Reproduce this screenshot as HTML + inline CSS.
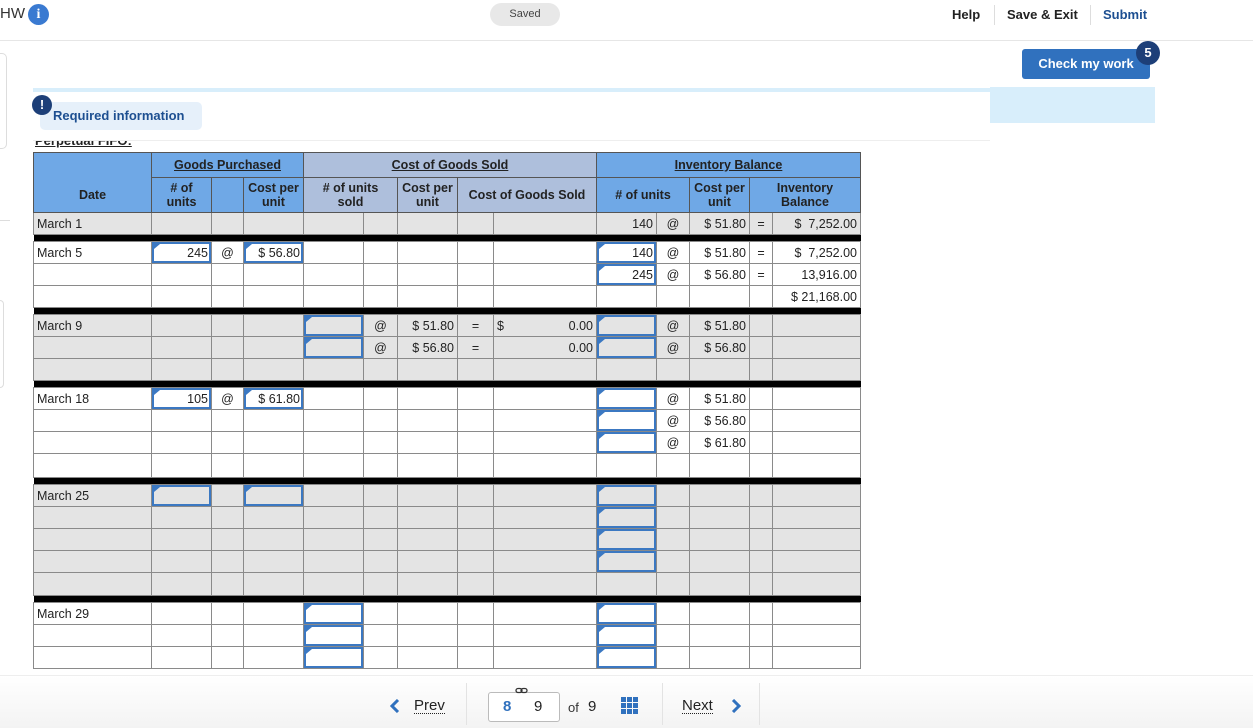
<!DOCTYPE html>
<html><head><meta charset="utf-8"><style>
*{box-sizing:border-box;margin:0;padding:0}
body{width:1253px;height:728px;overflow:hidden;background:#fff;font-family:"Liberation Sans",Arial,sans-serif;position:relative;color:#222}
.top{position:absolute;left:0;top:0;width:1253px;height:41px;border-bottom:1px solid #e6e6e6;background:#fff}
.abs{position:absolute}
table{position:absolute;left:33px;top:152px;border-collapse:collapse;table-layout:fixed;font-size:12.5px}
td{border:1px solid #8a8a8a;height:22px;padding:0 3px;white-space:nowrap;overflow:hidden;position:relative;line-height:14px}
tr.g td{background:#e4e4e4}
tr.w td{background:#fff}
tr.bar td{background:#000;height:7px;border:none;padding:0;line-height:0;font-size:0}
.r{text-align:right}.c{text-align:center}
.inp{box-shadow:inset 0 0 0 2px #3b78c2}
.inp:before{content:"";position:absolute;left:2px;top:2px;border-left:6px solid #3b78c2;border-bottom:5px solid transparent}
th{font-weight:bold;font-size:12.5px;border:1px solid #555;line-height:14px}
.b{background:#6fa8e6}.p{background:#aebfdc}
u{text-decoration:underline}
</style></head><body>
<div class="top">
<div class="abs" style="left:0;top:5px;font-size:15px;color:#333">HW</div>
<div class="abs" style="left:28px;top:4px;width:21px;height:21px;border-radius:50%;background:#3a7ad1;color:#fff;font-weight:bold;font-size:14px;text-align:center;line-height:21px;font-family:'Liberation Serif',serif">i</div>
<div class="abs" style="left:490px;top:3px;width:70px;height:23px;border-radius:12px;background:#e8e8e8;font-size:11px;color:#444;text-align:center;line-height:23px">Saved</div>
<div class="abs" style="left:952px;top:7px;font-size:13px;font-weight:bold;color:#222">Help</div>
<div class="abs" style="left:994px;top:5px;width:1px;height:20px;background:#ddd"></div>
<div class="abs" style="left:1007px;top:7px;font-size:13px;font-weight:bold;color:#222">Save &amp; Exit</div>
<div class="abs" style="left:1090px;top:5px;width:1px;height:20px;background:#ddd"></div>
<div class="abs" style="left:1103px;top:7px;font-size:13px;font-weight:bold;color:#1d4f91">Submit</div>
</div>
<div class="abs" style="left:1022px;top:49px;width:128px;height:30px;background:#3071be;border-radius:3px;color:#fff;font-weight:bold;font-size:13px;text-align:center;line-height:30px">Check my work</div>
<div class="abs" style="left:1136px;top:41px;width:24px;height:24px;border-radius:50%;background:#1d3f78;color:#fff;font-weight:bold;font-size:13px;text-align:center;line-height:24px">5</div>
<div class="abs" style="left:0;top:53px;width:7px;height:96px;border:1px solid #ddd;border-left:none;border-radius:0 5px 5px 0"></div>
<div class="abs" style="left:0;top:300px;width:4px;height:88px;border:1px solid #ddd;border-left:none;border-radius:0 5px 5px 0"></div>
<div class="abs" style="left:0;top:220px;width:10px;height:1px;background:#ddd"></div>
<div class="abs" style="left:990px;top:87px;width:165px;height:36px;background:#d8eefb"></div>
<table>
<colgroup><col style="width:118px"><col style="width:60px"><col style="width:32px"><col style="width:60px"><col style="width:60px"><col style="width:34px"><col style="width:60px"><col style="width:36px"><col style="width:103px"><col style="width:60px"><col style="width:33px"><col style="width:60px"><col style="width:23px"><col style="width:88px"></colgroup>
<tr style="height:25px"><th class="b" rowspan="2" style="padding-top:24px">Date</th><th class="b" colspan="3"><u>Goods Purchased</u></th><th class="p" colspan="5"><u>Cost of Goods Sold</u></th><th class="b" colspan="5"><u>Inventory Balance</u></th></tr>
<tr style="height:35px"><th class="b"># of<br>units</th><th class="b"></th><th class="b">Cost per<br>unit</th><th class="p" colspan="2"># of units<br>sold</th><th class="p">Cost per<br>unit</th><th class="p" colspan="2">Cost of Goods Sold</th><th class="b" colspan="2"># of units</th><th class="b">Cost per<br>unit</th><th class="b" colspan="2">Inventory<br>Balance</th></tr>
<tr class="g"><td>March 1</td><td></td><td></td><td></td><td></td><td></td><td></td><td></td><td></td><td class="r">140</td><td class="c">@</td><td class="r">$ 51.80</td><td class="c">=</td><td class="r">$ &nbsp;7,252.00</td></tr>
<tr class="bar"><td colspan="14"></td></tr>
<tr class="w"><td>March 5</td><td class="r inp">245</td><td class="c">@</td><td class="r inp">$ 56.80</td><td></td><td></td><td></td><td></td><td></td><td class="r inp">140</td><td class="c">@</td><td class="r">$ 51.80</td><td class="c">=</td><td class="r">$ &nbsp;7,252.00</td></tr>
<tr class="w"><td></td><td></td><td></td><td></td><td></td><td></td><td></td><td></td><td></td><td class="r inp">245</td><td class="c">@</td><td class="r">$ 56.80</td><td class="c">=</td><td class="r">13,916.00</td></tr>
<tr class="w"><td></td><td></td><td></td><td></td><td></td><td></td><td></td><td></td><td></td><td></td><td></td><td></td><td></td><td class="r">$ 21,168.00</td></tr>
<tr class="bar"><td colspan="14"></td></tr>
<tr class="g"><td>March 9</td><td></td><td></td><td></td><td class="inp"></td><td class="c">@</td><td class="r">$ 51.80</td><td class="c">=</td><td>$<span style="float:right">0.00</span></td><td class="inp"></td><td class="c">@</td><td class="r">$ 51.80</td><td></td><td></td></tr>
<tr class="g"><td></td><td></td><td></td><td></td><td class="inp"></td><td class="c">@</td><td class="r">$ 56.80</td><td class="c">=</td><td class="r">0.00</td><td class="inp"></td><td class="c">@</td><td class="r">$ 56.80</td><td></td><td></td></tr>
<tr class="g"><td></td><td></td><td></td><td></td><td></td><td></td><td></td><td></td><td></td><td></td><td></td><td></td><td></td><td></td></tr>
<tr class="bar"><td colspan="14"></td></tr>
<tr class="w"><td>March 18</td><td class="r inp">105</td><td class="c">@</td><td class="r inp">$ 61.80</td><td></td><td></td><td></td><td></td><td></td><td class="inp"></td><td class="c">@</td><td class="r">$ 51.80</td><td></td><td></td></tr>
<tr class="w"><td></td><td></td><td></td><td></td><td></td><td></td><td></td><td></td><td></td><td class="inp"></td><td class="c">@</td><td class="r">$ 56.80</td><td></td><td></td></tr>
<tr class="w"><td></td><td></td><td></td><td></td><td></td><td></td><td></td><td></td><td></td><td class="inp"></td><td class="c">@</td><td class="r">$ 61.80</td><td></td><td></td></tr>
<tr class="w" style="height:24px"><td></td><td></td><td></td><td></td><td></td><td></td><td></td><td></td><td></td><td></td><td></td><td></td><td></td><td></td></tr>
<tr class="bar"><td colspan="14"></td></tr>
<tr class="g"><td>March 25</td><td class="inp"></td><td></td><td class="inp"></td><td></td><td></td><td></td><td></td><td></td><td class="inp"></td><td></td><td></td><td></td><td></td></tr>
<tr class="g"><td></td><td></td><td></td><td></td><td></td><td></td><td></td><td></td><td></td><td class="inp"></td><td></td><td></td><td></td><td></td></tr>
<tr class="g"><td></td><td></td><td></td><td></td><td></td><td></td><td></td><td></td><td></td><td class="inp"></td><td></td><td></td><td></td><td></td></tr>
<tr class="g"><td></td><td></td><td></td><td></td><td></td><td></td><td></td><td></td><td></td><td class="inp"></td><td></td><td></td><td></td><td></td></tr>
<tr class="g" style="height:23px"><td></td><td></td><td></td><td></td><td></td><td></td><td></td><td></td><td></td><td></td><td></td><td></td><td></td><td></td></tr>
<tr class="bar"><td colspan="14"></td></tr>
<tr class="w"><td>March 29</td><td></td><td></td><td></td><td class="inp"></td><td></td><td></td><td></td><td></td><td class="inp"></td><td></td><td></td><td></td><td></td></tr>
<tr class="w"><td></td><td></td><td></td><td></td><td class="inp"></td><td></td><td></td><td></td><td></td><td class="inp"></td><td></td><td></td><td></td><td></td></tr>
<tr class="w"><td></td><td></td><td></td><td></td><td class="inp"></td><td></td><td></td><td></td><td></td><td class="inp"></td><td></td><td></td><td></td><td></td></tr>
</table>
<div class="abs" style="left:33px;top:88px;width:957px;height:53px;background:#fff;border-top:4px solid #d8eefb;border-bottom:1px solid #eee"></div>
<div class="abs" style="left:35px;top:141px;height:7px;overflow:hidden;width:120px"><div style="margin-top:-8px;font-size:13px;font-weight:bold;text-decoration:underline;line-height:15px">Perpetual FIFO:</div></div>
<div class="abs" style="left:40px;top:102px;width:162px;height:28px;background:#e6f0fa;border-radius:5px;color:#1d4f91;font-weight:bold;font-size:13px;line-height:28px;padding-left:13px">Required information</div>
<div class="abs" style="left:32px;top:95px;width:20px;height:20px;border-radius:50%;background:#1d3f78;color:#fff;font-weight:bold;font-size:13px;text-align:center;line-height:20px">!</div>
<div class="abs" style="left:0;top:675px;width:1253px;height:53px;background:linear-gradient(#fff,#f3f3f3);border-top:1px solid #eee"></div>
<div class="abs" style="left:466px;top:683px;width:1px;height:42px;background:#e3e3e3"></div>
<div class="abs" style="left:662px;top:683px;width:1px;height:42px;background:#e3e3e3"></div>
<div class="abs" style="left:759px;top:683px;width:1px;height:42px;background:#e3e3e3"></div>
<svg class="abs" style="left:390px;top:699px" width="10" height="14"><path d="M8 1 L2 7 L8 13" stroke="#3071be" stroke-width="3" fill="none"/></svg>
<div class="abs" style="left:414px;top:698px;font-size:15px;color:#222;border-bottom:1px dotted #222;line-height:15px">Prev</div>
<div class="abs" style="left:488px;top:692px;width:72px;height:30px;border:1px solid #bbb;border-radius:3px;background:#fff"></div>
<svg class="abs" style="left:515px;top:687px" width="14" height="8"><rect x="1" y="1.5" width="6" height="4" rx="2" stroke="#333" stroke-width="1.3" fill="#fff"/><rect x="6" y="1.5" width="6" height="4" rx="2" stroke="#333" stroke-width="1.3" fill="none"/></svg>
<div class="abs" style="left:503px;top:698px;font-size:15px;font-weight:bold;color:#3071be">8</div>
<div class="abs" style="left:534px;top:698px;font-size:15px;color:#222">9</div>
<div class="abs" style="left:568px;top:700px;font-size:13px;color:#333">of</div>
<div class="abs" style="left:588px;top:698px;font-size:15px;color:#222">9</div>
<svg class="abs" style="left:621px;top:697px" width="18" height="18"><g fill="#3071be"><rect x="0" y="0" width="5" height="5"/><rect x="6" y="0" width="5" height="5"/><rect x="12" y="0" width="5" height="5"/><rect x="0" y="6" width="5" height="5"/><rect x="6" y="6" width="5" height="5"/><rect x="12" y="6" width="5" height="5"/><rect x="0" y="12" width="5" height="5"/><rect x="6" y="12" width="5" height="5"/><rect x="12" y="12" width="5" height="5"/></g></svg>
<div class="abs" style="left:682px;top:698px;font-size:15px;color:#222;border-bottom:1px dotted #222;line-height:15px">Next</div>
<svg class="abs" style="left:731px;top:699px" width="10" height="14"><path d="M2 1 L8 7 L2 13" stroke="#3071be" stroke-width="3" fill="none"/></svg>
</body></html>
